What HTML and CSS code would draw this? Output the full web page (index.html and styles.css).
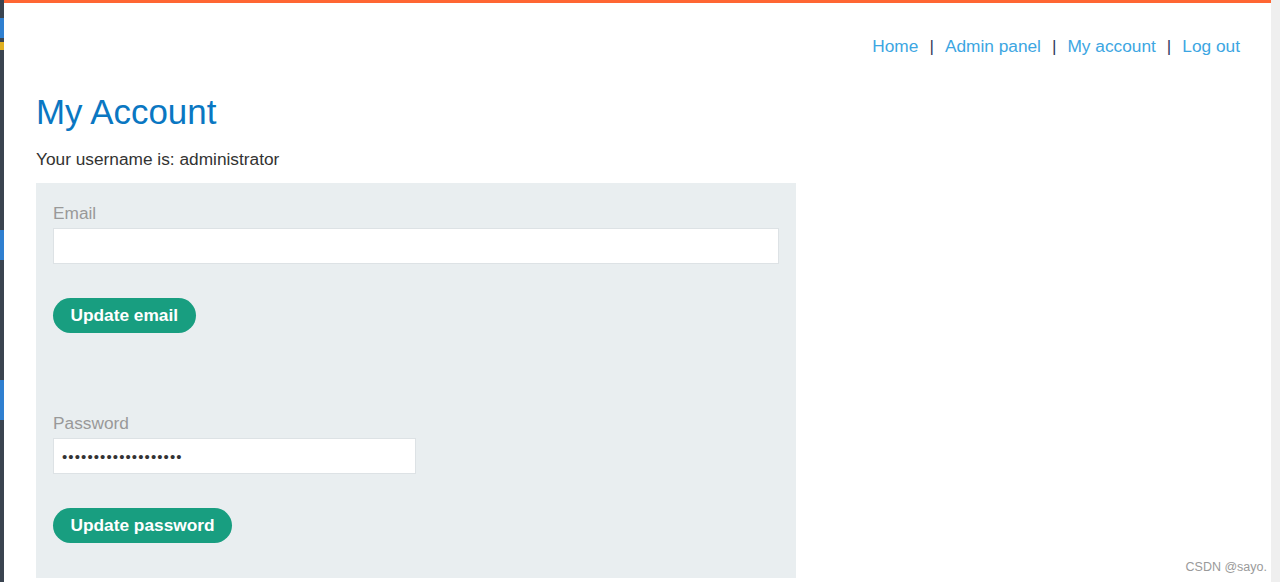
FILE: index.html
```html
<!DOCTYPE html>
<html lang="en">
<head>
<meta charset="utf-8">
<title>My Account</title>
<link rel="stylesheet" href="styles.css">
</head>
<body>
<div class="screen">
  <div class="desktop-edge">
    <span class="edge-blue e1"></span>
    <span class="edge-yellow"></span>
    <span class="edge-blue e2"></span>
    <span class="edge-blue e3"></span>
  </div>
  <div class="browser">
    <div class="topbar"></div>
    <div class="page">
      <nav class="nav">
        <a href="#" class="nav-link">Home</a><span class="sep">|</span><a href="#" class="nav-link">Admin panel</a><span class="sep">|</span><a href="#" class="nav-link">My account</a><span class="sep">|</span><a href="#" class="nav-link">Log out</a>
      </nav>
      <h1 class="title">My Account</h1>
      <p class="username">Your username is: administrator</p>
      <div class="panel">
        <form class="form">
          <label class="label">Email</label>
          <input class="input input-wide" type="email" value="">
          <button type="button" class="btn">Update email</button>
        </form>
        <form class="form form-second">
          <label class="label">Password</label>
          <input class="input input-narrow" type="password" value="aaaaaaaaaaaaaaaaaaa">
          <button type="button" class="btn">Update password</button>
        </form>
      </div>
    </div>
  </div>
  <div class="scrollbar"></div>
  <div class="watermark">CSDN @sayo.</div>
</div>
</body>
</html>
```
FILE: styles.css
```css
html, body {
  margin: 0;
  padding: 0;
  height: 100%;
  overflow: hidden;
}
body {
  font-family: "Liberation Sans", Arial, sans-serif;
  font-size: 17.3px;
  color: #333332;
  background: #fff;
}
.screen {
  display: flex;
  height: 582px;
  position: relative;
}
.desktop-edge {
  width: 4px;
  background: #3a4450;
  display: flex;
  flex-direction: column;
}
.edge-blue { display: block; background: #2f7fd0; }
.edge-yellow { display: block; background: #e0b020; height: 8px; margin-top: 4px; }
.e1 { height: 20px; margin-top: 18px; }
.e2 { height: 30px; margin-top: 180px; }
.e3 { height: 40px; margin-top: 120px; }
.browser {
  flex: 1;
  display: flex;
  flex-direction: column;
  background: #fff;
}
.topbar {
  height: 3px;
  background: #ff6633;
}
.page {
  padding: 0 31px 0 32px;
}
.nav {
  display: flex;
  justify-content: flex-end;
  align-items: baseline;
  margin-top: 33px;
  line-height: 20px;
}
.nav-link {
  color: #3ca6e2;
  text-decoration: none;
}
.sep {
  color: #333b5c;
  padding: 0 11px;
}
.title {
  margin: 35px 0 0;
  font-size: 34.9px;
  font-weight: normal;
  color: #0a77c2;
  line-height: 42px;
}
.username {
  margin: 16px 0 0;
  line-height: 20px;
}
.panel {
  width: 726px;
  margin-top: 14px;
  background: #e9eef0;
  padding: 20px 17px 35px;
}
.form {
  display: flex;
  flex-direction: column;
  align-items: flex-start;
}
.form-second {
  margin-top: 80px;
}
.label {
  color: #999999;
  line-height: 20px;
}
.input {
  box-sizing: border-box;
  height: 36px;
  margin-top: 5px;
  border: 1px solid #dde2e5;
  background: #fff;
  padding: 0 8px;
  font-family: "Liberation Sans", Arial, sans-serif;
  font-size: 14px;
  color: #333;
  outline: none;
}
.input-wide { width: 726px; }
.input-narrow { width: 363px; font-size: 15px; letter-spacing: 1.1px; }
.btn {
  margin-top: 34px;
  height: 35px;
  padding: 0 17.5px;
  border: none;
  border-radius: 18px;
  background: #189e80;
  color: #fff;
  font-family: "Liberation Sans", Arial, sans-serif;
  font-size: 17.3px;
  font-weight: bold;
  cursor: pointer;
}
.scrollbar {
  width: 9px;
  background: #efefef;
}
.watermark {
  position: absolute;
  right: 13px;
  bottom: 8px;
  font-size: 12.5px;
  color: #9a9a9a;
}
```
